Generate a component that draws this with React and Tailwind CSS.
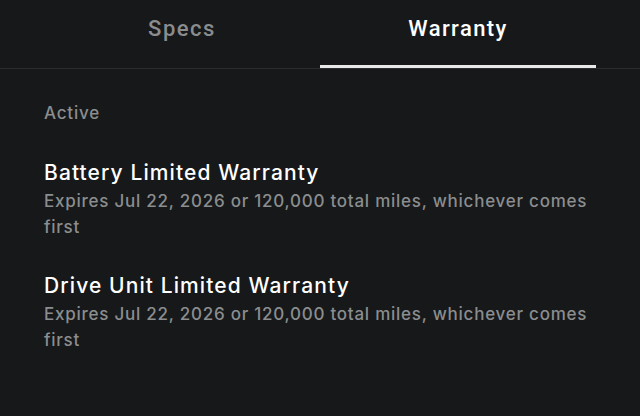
export default function App() {
  const items = [
    "Battery Limited Warranty",
    "Drive Unit Limited Warranty",
  ];
  return (
    <div className="w-[640px] h-[416px] bg-[#161819] overflow-hidden" style={{ fontFamily: "Inter, 'Noto Sans', sans-serif" }}>
      <div className="border-b border-[#2a2d2f]">
        <div className="flex px-[44px]">
          <div className="flex-1 h-[68px] flex items-center justify-center pb-[9px] border-b-[3px] border-transparent">
            <span className="text-[22px] font-medium tracking-[1.5px] text-[#8a8c8e]" style={{ fontFamily: "Roboto, sans-serif" }}>Specs</span>
          </div>
          <div className="flex-1 h-[68px] flex items-center justify-center pb-[9px] border-b-[3px] border-[#e8e8e8]">
            <span className="text-[22px] font-medium tracking-[1.4px] text-white" style={{ fontFamily: "Roboto, sans-serif" }}>Warranty</span>
          </div>
        </div>
      </div>
      <div className="px-[44px] pt-[32px]">
        <div className="text-[17px] font-medium tracking-[0.8px] text-[#8b8d8f] leading-[24px]">Active</div>
        <div className="flex flex-col gap-[32px] mt-[34px]">
          {items.map((t) => (
            <div key={t}>
              <div className="text-[21px] font-medium tracking-[1.1px] text-white leading-[28px]">{t}</div>
              <div className="text-[17px] font-medium tracking-[0.75px] text-[#8b8d8f] leading-[26px] mt-[1px] -mr-[4px]">
                Expires Jul 22, 2026 or 120,000 total miles, whichever comes first
              </div>
            </div>
          ))}
        </div>
      </div>
    </div>
  );
}
